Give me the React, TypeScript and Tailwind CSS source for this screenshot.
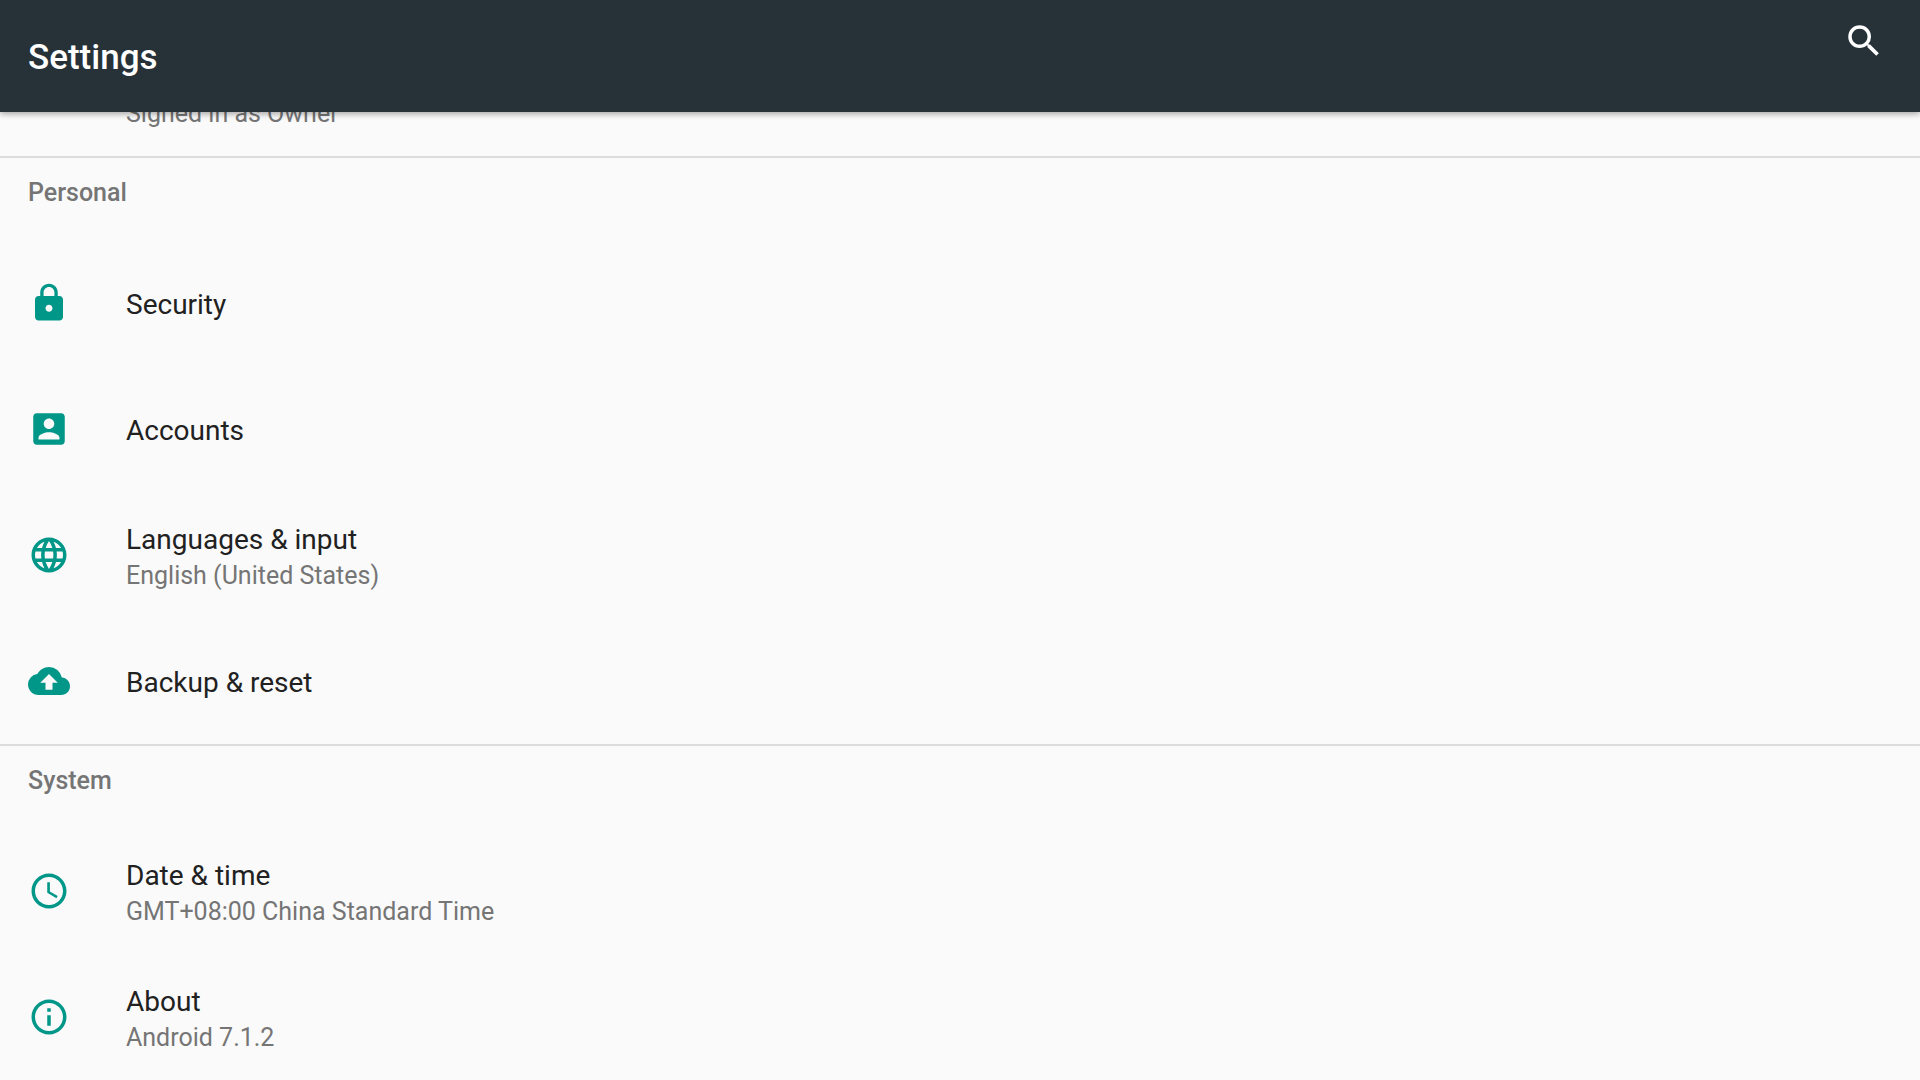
import { ReactNode } from "react";

const icons = {
  search: (
    <path d="M15.5 14h-.79l-.28-.27A6.471 6.471 0 0 0 16 9.5 6.5 6.5 0 1 0 9.5 16c1.61 0 3.09-.59 4.23-1.57l.27.28v.79l5 4.99L20.49 19l-4.99-5zm-6 0C7.01 14 5 11.99 5 9.5S7.01 5 9.5 5 14 7.01 14 9.5 11.99 14 9.5 14z" />
  ),
  lock: (
    <path d="M18 8h-1V6c0-2.76-2.24-5-5-5S7 3.24 7 6v2H6c-1.1 0-2 .9-2 2v10c0 1.1.9 2 2 2h12c1.1 0 2-.9 2-2V10c0-1.1-.9-2-2-2zm-6 9c-1.1 0-2-.9-2-2s.9-2 2-2 2 .9 2 2-.9 2-2 2zm3.1-9H8.9V6c0-1.71 1.39-3.1 3.1-3.1 1.71 0 3.1 1.39 3.1 3.1v2z" />
  ),
  account: (
    <path d="M3 5v14c0 1.1.89 2 2 2h14c1.1 0 2-.9 2-2V5c0-1.1-.9-2-2-2H5c-1.11 0-2 .9-2 2zm12 4c0 1.66-1.34 3-3 3s-3-1.34-3-3 1.34-3 3-3 3 1.34 3 3zm-9 8c0-2 4-3.1 6-3.1s6 1.1 6 3.1v1H6v-1z" />
  ),
  language: (
    <path d="M11.99 2C6.47 2 2 6.48 2 12s4.47 10 9.99 10C17.52 22 22 17.52 22 12S17.52 2 11.99 2zm6.93 6h-2.95a15.65 15.65 0 0 0-1.38-3.56A8.03 8.03 0 0 1 18.92 8zM12 4.04c.83 1.2 1.48 2.53 1.91 3.96h-3.82c.43-1.43 1.08-2.76 1.91-3.96zM4.26 14C4.1 13.36 4 12.69 4 12s.1-1.36.26-2h3.38c-.08.66-.14 1.32-.14 2s.06 1.34.14 2H4.26zm.82 2h2.95c.32 1.25.78 2.45 1.38 3.56A7.987 7.987 0 0 1 5.08 16zm2.95-8H5.08a7.987 7.987 0 0 1 4.33-3.56A15.65 15.65 0 0 0 8.03 8zM12 19.96c-.83-1.2-1.48-2.53-1.91-3.96h3.82c-.43 1.43-1.08 2.76-1.91 3.96zM14.34 14H9.66c-.09-.66-.16-1.32-.16-2s.07-1.35.16-2h4.68c.09.65.16 1.32.16 2s-.07 1.34-.16 2zm.25 5.56c.6-1.11 1.06-2.31 1.38-3.56h2.95a8.03 8.03 0 0 1-4.33 3.56zM16.36 14c.08-.66.14-1.32.14-2s-.06-1.34-.14-2h3.38c.16.64.26 1.31.26 2s-.1 1.36-.26 2h-3.38z" />
  ),
  backup: (
    <path d="M19.35 10.04A7.49 7.49 0 0 0 12 4C9.11 4 6.6 5.64 5.35 8.04A5.994 5.994 0 0 0 0 14c0 3.31 2.69 6 6 6h13c2.76 0 5-2.24 5-5 0-2.64-2.05-4.78-4.65-4.96zM14 13v4h-4v-4H7l5-5 5 5h-3z" />
  ),
  clock: (
    <path d="M11.99 2C6.47 2 2 6.48 2 12s4.47 10 9.99 10C17.52 22 22 17.52 22 12S17.52 2 11.99 2zM12 20c-4.42 0-8-3.58-8-8s3.58-8 8-8 8 3.58 8 8-3.58 8-8 8zm.5-13H11v6l5.25 3.15.75-1.23-4.5-2.67z" />
  ),
  info: (
    <path d="M11 17h2v-6h-2v6zm1-15C6.48 2 2 6.48 2 12s4.48 10 10 10 10-4.48 10-10S17.52 2 12 2zm0 18c-4.41 0-8-3.59-8-8s3.59-8 8-8 8 3.59 8 8-3.59 8-8 8zM11 9h2V7h-2v2z" />
  ),
};

type IconName = keyof typeof icons;

type Item = {
  icon: IconName;
  title: string;
  summary?: string;
};

const personal: Item[] = [
  { icon: "lock", title: "Security" },
  { icon: "account", title: "Accounts" },
  {
    icon: "language",
    title: "Languages & input",
    summary: "English (United States)",
  },
  { icon: "backup", title: "Backup & reset" },
];

const system: Item[] = [
  {
    icon: "clock",
    title: "Date & time",
    summary: "GMT+08:00 China Standard Time",
  },
  { icon: "info", title: "About", summary: "Android 7.1.2" },
];

function Icon({ name }: { name: IconName }) {
  return (
    <svg
      viewBox="0 0 24 24"
      fill="currentColor"
      aria-hidden="true"
      className="size-[42px] shrink-0"
    >
      {icons[name]}
    </svg>
  );
}

function Summary({ children }: { children: ReactNode }) {
  return (
    <span className="block text-[25px] leading-[34px] text-[#757575]">
      {children}
    </span>
  );
}

function SettingRow({ icon, title, summary }: Item) {
  return (
    <li>
      <button
        type="button"
        className="flex h-[126px] w-full items-center gap-14 px-7 text-left text-[#009688]"
      >
        <Icon name={icon} />
        <span className="pt-[3px]">
          <span className="block text-[28px] leading-[38px] text-[#212121]">
            {title}
          </span>
          {summary && <Summary>{summary}</Summary>}
        </span>
      </button>
    </li>
  );
}

function Section({ title, items }: { title: string; items: Item[] }) {
  return (
    <section className="border-t-2 border-[#dcdcdc]">
      <h2 className="px-7 pb-3 text-[25px] leading-[70px] font-medium text-[#757575]">
        {title}
      </h2>
      <ul>
        {items.map((item) => (
          <SettingRow key={item.title} {...item} />
        ))}
      </ul>
    </section>
  );
}

export default function App() {
  return (
    <div className="min-h-screen bg-[#fafafa] font-['Roboto',sans-serif]">
      <header className="relative z-10 flex h-28 items-center justify-between bg-[#263238] px-7 text-white shadow-[0_2px_6px_rgba(0,0,0,0.35)]">
        <h1 className="pt-1 text-[35px] leading-[42px] font-medium">
          Settings
        </h1>
        <button
          type="button"
          aria-label="Search"
          className="self-start px-[7px] pt-5"
        >
          <Icon name="search" />
        </button>
      </header>

      {/* the list is scrolled, so its first row is partly under the app bar */}
      <main className="-mt-4">
        <div className="h-15 pr-7 pl-[126px] pt-[1px]">
          <Summary>Signed in as Owner</Summary>
        </div>
        <Section title="Personal" items={personal} />
        <Section title="System" items={system} />
      </main>
    </div>
  );
}
